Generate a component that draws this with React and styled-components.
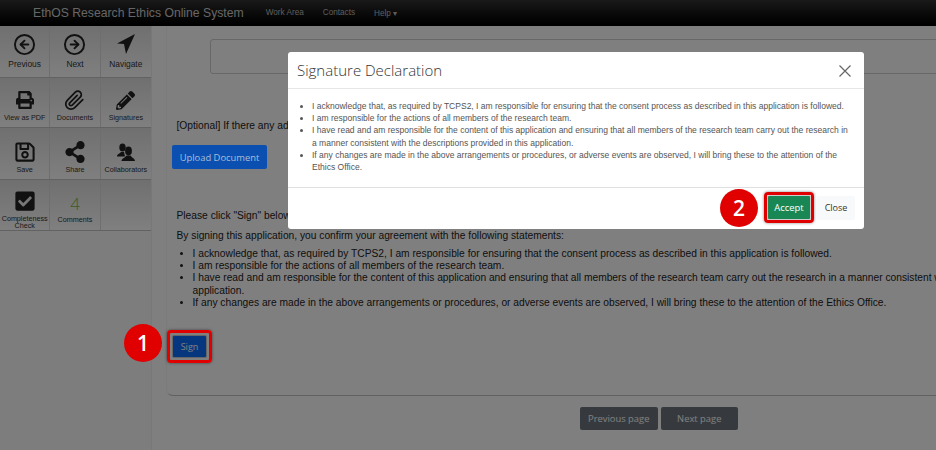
import React from 'react';
import styled, { createGlobalStyle } from 'styled-components';
import { FaPrint, FaPencilAlt, FaRegSave, FaShareAlt, FaCheckSquare } from 'react-icons/fa';
import { FiArrowLeftCircle, FiArrowRightCircle, FiPaperclip } from 'react-icons/fi';

const statements = [
  'I acknowledge that, as required by TCPS2, I am responsible for ensuring that the consent process as described in this application is followed.',
  'I am responsible for the actions of all members of the research team.',
  'I have read and am responsible for the content of this application and ensuring that all members of the research team carry out the research in a manner consistent with the descriptions provided in this application.',
  'If any changes are made in the above arrangements or procedures, or adverse events are observed, I will bring these to the attention of the Ethics Office.',
];

const NavigateIcon = () => (
  <svg width="18" height="20" viewBox="0 0 18 20">
    <path d="M18 0 L0 9.5 L7 10 L9 20 Z" fill="currentColor" />
  </svg>
);

const CollaboratorsIcon = () => (
  <svg width="18" height="18" viewBox="0 0 18 18">
    <ellipse cx="5.5" cy="4.5" rx="3.2" ry="4" fill="currentColor" />
    <path d="M0 13.5 C0 11 3 10.5 4 9 H7 L8 13.5 Z" fill="currentColor" />
    <ellipse cx="11.5" cy="8" rx="3.4" ry="4.4" fill="currentColor" />
    <path d="M4.5 18 C4.5 15.5 8 15 9.5 12.5 H13.5 C15 15 18 15.5 18 18 Z" fill="currentColor" />
  </svg>
);

const rows = [
  {
    height: 52,
    pad: 9,
    tools: [
      { label: 'Previous', icon: <FiArrowLeftCircle size={23} />, big: true },
      { label: 'Next', icon: <FiArrowRightCircle size={23} />, big: true },
      { label: 'Navigate', icon: <NavigateIcon />, big: true },
    ],
  },
  {
    height: 50,
    pad: 4,
    tools: [
      { label: 'View as PDF', icon: <FaPrint size={18} /> },
      { label: 'Documents', icon: <FiPaperclip size={21} /> },
      { label: 'Signatures', icon: <FaPencilAlt size={19} /> },
    ],
  },
  {
    height: 52,
    pad: 4,
    tools: [
      { label: 'Save', icon: <FaRegSave size={22} /> },
      { label: 'Share', icon: <FaShareAlt size={22} /> },
      { label: 'Collaborators', icon: <CollaboratorsIcon /> },
    ],
  },
  {
    height: 51,
    pad: 1,
    tools: [
      { label: 'Completeness Check', icon: <FaCheckSquare size={22} /> },
      { label: 'Comments', count: 4 },
      { label: '' },
    ],
  },
];

const App = () => {
  return (
    <React.Fragment>
      <GlobalStyle />
      <Page>
        <Navbar>
          <Brand>EthOS Research Ethics Online System</Brand>
          <NavLink>Work Area</NavLink>
          <NavLink>Contacts</NavLink>
          <NavLink>Help ▾</NavLink>
        </Navbar>
        <Body>
          <Sidebar>
            {rows.map((row) => (
              <ToolRow key={row.tools[0].label} $height={row.height}>
                {row.tools.map((tool) => (
                  <Tool key={tool.label} $pad={tool.count ? 5 : row.pad}>
                    {tool.count ? <Count>{tool.count}</Count> : <ToolIcon>{tool.icon}</ToolIcon>}
                    <ToolLabel $big={tool.big}>{tool.label}</ToolLabel>
                  </Tool>
                ))}
              </ToolRow>
            ))}
          </Sidebar>
          <Main>
            <Card>
              <Field />
              <Paragraph $top={46}>[Optional] If there any additional documents, please upload them here.</Paragraph>
              <UploadButton>Upload Document</UploadButton>
              <Paragraph $top={41}>Please click "Sign" below to sign this application.</Paragraph>
              <Paragraph $top={8}>By signing this application, you confirm your agreement with the following statements:</Paragraph>
              <MainList>
                {statements.map((s) => (
                  <li key={s}>{s}</li>
                ))}
              </MainList>
              <SignWrap>
                <SignButton>Sign</SignButton>
                <Ring $gap={5} />
                <Badge $left={-48} $top={-11}>1</Badge>
              </SignWrap>
            </Card>
            <Pager>
              <PagerButton>Previous page</PagerButton>
              <PagerButton>Next page</PagerButton>
            </Pager>
          </Main>
        </Body>
        <Backdrop />
        <Modal>
          <ModalHeader>
            <ModalTitle>Signature Declaration</ModalTitle>
            <CloseGlyph viewBox="0 0 12 12">
              <path d="M0.5 0.5 L11.5 11.5 M11.5 0.5 L0.5 11.5" />
            </CloseGlyph>
          </ModalHeader>
          <ModalBody>
            <ModalList>
              {statements.map((s) => (
                <li key={s}>{s}</li>
              ))}
            </ModalList>
          </ModalBody>
          <ModalFooter>
            <AcceptWrap>
              <AcceptButton>Accept</AcceptButton>
              <Ring $gap={3} />
              <Badge $left={-47} $top={-6}>2</Badge>
            </AcceptWrap>
            <CloseButton>Close</CloseButton>
          </ModalFooter>
        </Modal>
      </Page>
    </React.Fragment>
  );
};

export default App;

const GlobalStyle = createGlobalStyle`
  html, body {
    margin: 0;
    padding: 0;
    background: #fff;
  }
  * {
    box-sizing: border-box;
  }
`;

const Page = styled.div`
  position: relative;
  width: 936px;
  height: 450px;
  overflow: hidden;
  background: #fff;
  font-family: "Liberation Sans", Arial, sans-serif;
  display: flex;
  flex-direction: column;
`;

const Navbar = styled.div`
  height: 26px;
  flex: none;
  display: flex;
  align-items: center;
  padding-left: 33px;
  background: linear-gradient(#333, #111 60%, #000);
  border-bottom: 1px solid #000;
`;

const Brand = styled.div`
  font-size: 12.2px;
  color: #ccc;
  margin-right: 22px;
  white-space: nowrap;
`;

const NavLink = styled.div`
  font-size: 8.2px;
  color: #bbb;
  margin-right: 19px;
  white-space: nowrap;
`;

const Body = styled.div`
  flex: 1;
  display: flex;
  min-height: 0;
`;

const Sidebar = styled.div`
  width: 152px;
  flex: none;
  background: #fbfbfb;
  border-right: 1px solid #f0f0f0;
`;

const ToolRow = styled.div`
  display: grid;
  grid-template-columns: repeat(3, 1fr);
  height: ${(p) => p.$height}px;
  width: 151px;
  background: linear-gradient(#e0e0e0, #fff);
  border-bottom: 1px solid #c4c4c4;
`;

const Tool = styled.div`
  display: flex;
  flex-direction: column;
  align-items: center;
  justify-content: flex-end;
  border-right: 1px solid #dcdcdc;
  padding-bottom: ${(p) => p.$pad}px;
  &:last-child {
    border-right: none;
  }
`;

const ToolIcon = styled.div`
  height: 24px;
  display: flex;
  align-items: center;
  justify-content: center;
  color: #222;
`;

const Count = styled.div`
  font-family: "Open Sans", sans-serif;
  font-weight: 300;
  font-size: 17px;
  height: 20px;
  line-height: 20px;
  color: #7ab648;
`;

const ToolLabel = styled.div`
  font-size: ${(p) => (p.$big ? 8.4 : 7.2)}px;
  line-height: ${(p) => (p.$big ? 8 : 6.5)}px;
  margin-top: ${(p) => (p.$big ? 4 : 3)}px;
  min-height: 8px;
  text-align: center;
  color: #333;
`;

const Main = styled.div`
  flex: 1;
  min-width: 0;
  padding-left: 14px;
`;

const Card = styled.div`
  width: 1000px;
  height: 370px;
  padding: 13px 0 0 9.5px;
  border-bottom: 1px solid #c0c0c0;
  border-left: 1px solid #f4f4f4;
  border-bottom-left-radius: 7px;
`;

const Field = styled.div`
  width: 800px;
  height: 35px;
  margin-left: 33.5px;
  border: 1px solid #d0d0d0;
  border-radius: 3px;
`;

const Paragraph = styled.p`
  margin: ${(p) => p.$top}px 0 0;
  font-size: 10.24px;
  line-height: 12px;
  color: #222;
  white-space: nowrap;
`;

const UploadButton = styled.div`
  position: relative;
  z-index: 20;
  width: 95px;
  height: 24px;
  margin: 13px 0 0 -4.5px;
  display: flex;
  align-items: center;
  justify-content: center;
  background: #0b50b0;
  border-radius: 2px;
  color: #a9bcd8;
  font-family: "Open Sans", sans-serif;
  font-size: 9.4px;
`;

const MainList = styled.ul`
  margin: 6px 0 0;
  padding: 0 0 0 16px;
  width: 930px;
  font-size: 10.24px;
  line-height: 12.2px;
  color: #222;
`;

const SignWrap = styled.div`
  position: relative;
  width: 35px;
  height: 23px;
  margin: 26px 0 0 -4.5px;
`;

const SignButton = styled.div`
  width: 100%;
  height: 100%;
  display: flex;
  align-items: center;
  justify-content: center;
  background: #0d6efd;
  border: 1px solid #ccc;
  border-radius: 2px;
  color: #fff;
  font-family: "Open Sans", sans-serif;
  font-size: 9px;
`;

const Ring = styled.div`
  position: absolute;
  inset: -${(p) => p.$gap}px;
  z-index: 30;
  border: 3px solid #e00000;
  border-radius: 4px;
  box-shadow: 0 0 3px rgba(0, 0, 0, 0.5);
`;

const Badge = styled.div`
  position: absolute;
  left: ${(p) => p.$left}px;
  top: ${(p) => p.$top}px;
  z-index: 30;
  width: 38px;
  height: 38px;
  border-radius: 50%;
  background: #e00000;
  color: #fff;
  display: flex;
  align-items: center;
  justify-content: center;
  font-family: "Open Sans", sans-serif;
  font-size: 21px;
  font-weight: 600;
`;

const Pager = styled.div`
  display: flex;
  gap: 3px;
  margin: 11px 0 0 414px;
`;

const PagerButton = styled.div`
  width: 77.5px;
  height: 23px;
  display: flex;
  align-items: center;
  justify-content: center;
  background: #6c757d;
  border-radius: 2px;
  color: #fff;
  font-family: "Open Sans", sans-serif;
  font-size: 9.4px;
`;

const Backdrop = styled.div`
  position: absolute;
  inset: 0;
  z-index: 10;
  background: rgba(0, 0, 0, 0.5);
`;

const Modal = styled.div`
  position: absolute;
  left: 288px;
  top: 52px;
  width: 576px;
  height: 177px;
  z-index: 20;
  background: #fff;
  border-radius: 3px;
  display: flex;
  flex-direction: column;
  color: #333;
`;

const ModalHeader = styled.div`
  height: 37px;
  flex: none;
  display: flex;
  align-items: center;
  justify-content: space-between;
  padding: 0 13px 0 9px;
  border-bottom: 1px solid #e6e6e6;
`;

const ModalTitle = styled.div`
  font-family: "Open Sans", sans-serif;
  font-weight: 300;
  font-size: 15px;
  color: #333;
`;

const CloseGlyph = styled.svg`
  width: 12px;
  height: 12px;
  margin-top: 2px;
  path {
    stroke: #666;
    stroke-width: 1.2;
    fill: none;
  }
`;

const ModalBody = styled.div`
  flex: 1;
  padding: 11px 14px 0 0;
  border-bottom: 1px solid #e0e0e0;
`;

const ModalList = styled.ul`
  margin: 0;
  padding-left: 24px;
  font-size: 8.52px;
  line-height: 12.2px;
  color: #555;
`;

const ModalFooter = styled.div`
  height: 41px;
  flex: none;
  display: flex;
  align-items: center;
  justify-content: flex-end;
  gap: 6px;
  padding: 0 9px 2px 0;
`;

const AcceptWrap = styled.div`
  position: relative;
  width: 44px;
  height: 25px;
`;

const AcceptButton = styled.div`
  width: 100%;
  height: 100%;
  display: flex;
  align-items: center;
  justify-content: center;
  background: #198754;
  border: 1px solid #ccc;
  border-radius: 2px;
  color: #fff;
  font-family: "Open Sans", sans-serif;
  font-size: 9.4px;
`;

const CloseButton = styled.div`
  width: 38px;
  height: 24px;
  display: flex;
  align-items: center;
  justify-content: center;
  background: #f8f9fa;
  border-radius: 2px;
  color: #333;
  font-family: "Open Sans", sans-serif;
  font-size: 9px;
`;
